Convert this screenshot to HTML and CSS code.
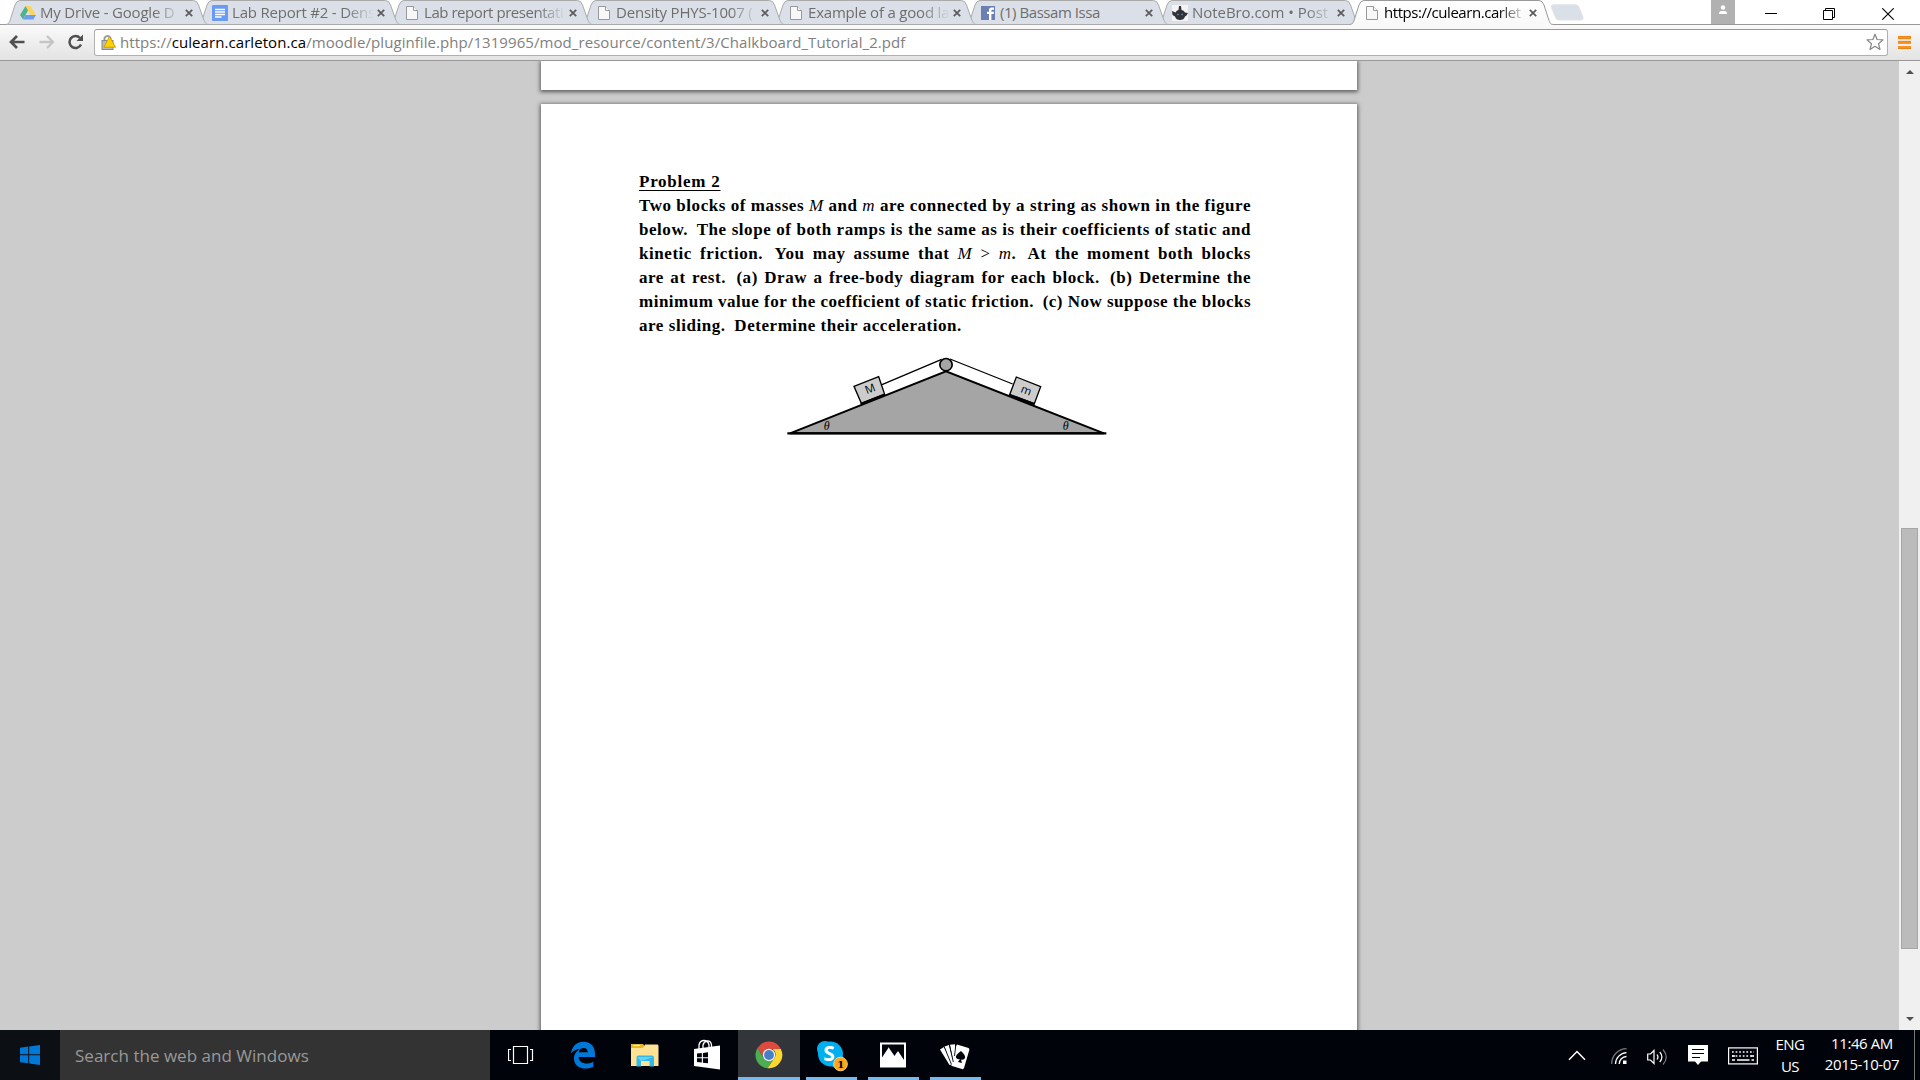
FILE: index.html
```html
<!DOCTYPE html>
<html lang="en">
<head>
<meta charset="utf-8">
<title>Chalkboard_Tutorial_2.pdf</title>
<link rel="stylesheet" href="styles.css">
</head>
<body>
<svg class="defs" width="0" height="0">
  <defs>
    <linearGradient id="activeFill" x1="0" y1="0" x2="0" y2="1"><stop offset="0" stop-color="#fff"/><stop offset="1" stop-color="#f8f8f8"/></linearGradient>
    <symbol id="tab" viewBox="0 0 204 25"><path d="M0 24.5C3 24 3.500 22 4.500 19L9 5Q10.500.5 14 .5H187.500Q191 .5 192.500 5L197.500 19C199 23 200 24.500 203 24.500Z" fill="#dbe0e8" stroke="#aaa"/></symbol>
    <symbol id="close" viewBox="0 0 8 8"><path d="M.8.8 7.200 7.200M7.200.8.8 7.200" stroke="#5d5d5d" stroke-width="1.800"/></symbol>
    <symbol id="doc" viewBox="0 0 12 14"><path d="M.5.5H7.500L11.500 4.500V13.500H.5Z" fill="#f8f8f8" stroke="#999"/><path d="M7.500.5V4.500H11.500" fill="#fff" stroke="#999"/></symbol>
  </defs>
</svg>

<header class="browser">
  <div class="strip">
    <div class="tabs">
      <div class="tab"><svg class="shape"><use href="#tab"/></svg>
        <svg class="icon" viewBox="0 0 16 16"><path d="M5.500 1H10.500L16 10H10.700Z" fill="#fbd55b"/><path d="M5.500 1 8 5.600 3 14.500 0 10Z" fill="#51b38b"/><path d="M5.500 10H16L13.300 14.500H3Z" fill="#6c9df0"/></svg>
        <span class="title faded">My Drive - Google D</span><svg class="close"><use href="#close"/></svg></div>
      <div class="tab"><svg class="shape"><use href="#tab"/></svg>
        <svg class="icon" viewBox="0 0 16 16"><rect width="16" height="16" rx="1" fill="#689bf3"/><path d="M3 4.500H13M3 7H13M3 9.500H13M3 12H9.500" stroke="#fff" stroke-width="1.300"/></svg>
        <span class="title faded">Lab Report #2 - Dens</span><svg class="close"><use href="#close"/></svg></div>
      <div class="tab"><svg class="shape"><use href="#tab"/></svg><svg class="icon paper"><use href="#doc"/></svg>
        <span class="title faded tight">Lab report presentati</span><svg class="close"><use href="#close"/></svg></div>
      <div class="tab"><svg class="shape"><use href="#tab"/></svg><svg class="icon paper"><use href="#doc"/></svg>
        <span class="title faded">Density PHYS-1007 (</span><svg class="close"><use href="#close"/></svg></div>
      <div class="tab"><svg class="shape"><use href="#tab"/></svg><svg class="icon paper"><use href="#doc"/></svg>
        <span class="title faded">Example of a good la</span><svg class="close"><use href="#close"/></svg></div>
      <div class="tab"><svg class="shape"><use href="#tab"/></svg>
        <svg class="icon" viewBox="0 0 16 16"><rect x="1" y="1" width="14" height="14" fill="#6b7fb5"/><path d="M9 15V9H7V6.800H9V5Q9 2.500 11.500 2.500H14V4.800H12.200Q11.400 4.800 11.400 5.700V6.800H14L13.700 9H11.400V15Z" fill="#fff"/></svg>
        <span class="title tight">(1) Bassam Issa</span><svg class="close"><use href="#close"/></svg></div>
      <div class="tab"><svg class="shape"><use href="#tab"/></svg>
        <svg class="icon" viewBox="0 0 16 16"><rect width="16" height="16" fill="#f4f4f4"/><path d="M7 1H9L9.500 5Q12 5 13 7.500L16 8 14.500 10.500 13 11.500Q12 15 8 15T3 11.500L.5 10 0 6 3.500 7.500Q4.500 5 6.500 5Z" fill="#30343a"/><path d="M5 8.500 7.500 9.500 5.500 10.500ZM11 8.500 8.800 9.500 10.500 10.500Z" fill="#718ba0"/></svg>
        <span class="title faded loose">NoteBro.com • Post a</span><svg class="close"><use href="#close"/></svg></div>
      <div class="tab active"><svg class="shape" viewBox="0 0 204 25"><path d="M0 24.500C3 24 3.500 22 4.500 19L9 5Q10.500.5 14 .5H189Q192.500.5 194 5L198.500 19C200 23 200 24.500 204 24.500V25H0Z" fill="url(#activeFill)"/><path d="M0 24.500C3 24 3.500 22 4.500 19L9 5Q10.500.5 14 .5H189Q192.500.5 194 5L198.500 19C200 23 200 24.500 204 24.500" fill="none" stroke="#999"/></svg><svg class="icon paper"><use href="#doc"/></svg>
        <span class="title faded tight">https://culearn.carlet</span><svg class="close"><use href="#close"/></svg></div>
    </div>
    <svg class="newtab" width="34" height="17" viewBox="0 0 34 17"><path d="M3.500.8H25.500Q28 .8 29 3L33 13.500Q33.500 16 31 16H9Q6.500 16 5.500 13.500L1.500 3.500Q.8.8 3.500.8Z" fill="#dae0e8" stroke="#e3e3e3"/></svg>
    <div class="window">
      <div class="user"><svg width="10" height="10" viewBox="0 0 10 10"><circle cx="5" cy="2.500" r="2.200" fill="#fff"/><path d="M1 9Q1 6 3.500 6H6.500Q9 6 9 9Z" fill="#fff"/></svg></div>
      <svg class="wmin" width="12" height="12"><path d="M0 6.500H12" stroke="#000"/></svg>
      <svg class="wmax" width="12" height="12"><path d="M.5 2.500H9.500V11.500H.5ZM2.500 2V.5H11.500V9.500H10" fill="none" stroke="#000"/></svg>
      <svg class="wclose" width="12" height="12"><path d="M.3.3 11.700 11.700M11.700.3.3 11.700" stroke="#000" stroke-width="1.100"/></svg>
    </div>
  </div>
  <div class="toolbar">
    <svg class="back" width="16" height="14" viewBox="0 0 16 14"><path d="M8 1 2 7 8 13M2 7H15.500" fill="none" stroke="#505050" stroke-width="2.700"/></svg>
    <svg class="forward" width="16" height="14" viewBox="0 0 16 14"><path d="M8 1 14 7 8 13M14 7H.5" fill="none" stroke="#c5c5c5" stroke-width="2.300"/></svg>
    <svg class="reload" width="16" height="16" viewBox="0 0 16 16"><path d="M13 10.500A6 6 0 1 1 12 4" fill="none" stroke="#505050" stroke-width="2.500"/><path d="M15 .5V7H8.500Z" fill="#505050"/></svg>
    <div class="omnibox">
      <svg class="lock" width="16" height="16" viewBox="0 0 16 16"><path d="M3.500 7V4A3.200 3.200 0 0 1 9.500 4V7" fill="none" stroke="#999" stroke-width="2"/><rect x="1" y="6.500" width="11" height="9" fill="#bbb" stroke="#888"/><path d="M8.500 2.500 14.500 13.200H2.800Z" fill="#ffd200" stroke="#cfa000" stroke-linejoin="round"/></svg>
      <span class="url">https://<b>culearn.carleton.ca</b>/moodle/pluginfile.php/1319965/mod_resource/content/3/Chalkboard_Tutorial_2.pdf</span>
      <svg class="star" width="18" height="18" viewBox="0 0 18 18"><path d="M9 1.200 11.100 6.500 17 6.900 12.500 10.700 14 16.500 9 13.300 4 16.500 5.500 10.700 1 6.900 6.900 6.500Z" fill="#fff" stroke="#858585" stroke-width="1.200" stroke-linejoin="round"/></svg>
    </div>
    <svg class="menu" width="13" height="13" viewBox="0 0 13 13"><path d="M0 1.500H13M0 6.500H13M0 11.500H13" stroke="#f7931e" stroke-width="3"/><path d="M0 2.800H13M0 5.300H13M0 12.700H13M0 .3H13" stroke="#dc7610" stroke-width=".6"/></svg>
  </div>
</header>

<main class="viewer">
  <div class="pages">
    <section class="page previous"></section>
    <section class="page current">
      <div class="problem">
        <p class="heading"><u>Problem 2</u></p>
        <p>Two blocks of masses <i>M</i> and <i>m</i> are connected by a string as shown in the figure</p>
        <p>below.&thinsp; The slope of both ramps is the same as is their coefficients of static and</p>
        <p>kinetic friction.&thinsp; You may assume that <i>M</i> <span class="rel">&gt;</span> <i>m</i>.&thinsp; At the moment both blocks</p>
        <p>are at rest.&thinsp; (a) Draw a free-body diagram for each block.&thinsp; (b) Determine the</p>
        <p class="dense">minimum value for the coefficient of static friction.&thinsp; (c) Now suppose the blocks</p>
        <p class="last">are sliding.&thinsp; Determine their acceleration.</p>
      </div>
      <svg class="figure" width="350" height="100" viewBox="0 0 1050 300">
        <path d="M60 265 528 79 1002 265Z" fill="#a5a5a5" stroke="#000" stroke-width="6"/>
        <path d="M52 265H1009" stroke="#000" stroke-width="7"/>
        <path d="M336 119 515 43M540 42 728 117" stroke="#000" stroke-width="4"/>
        <path d="M252 124 326 95 344 148 274 175Z" fill="#ccc" stroke="#000" stroke-width="4"/>
        <path d="M739 96 812 125 793 176 719 149Z" fill="#ccc" stroke="#000" stroke-width="4"/>
        <path d="M272 177 344 149M719 150 794 178" stroke="#000" stroke-width="7"/>
        <circle cx="528" cy="59" r="18.500" fill="#a5a5a5" stroke="#000" stroke-width="5"/>
        <text class="mass" transform="translate(290 148) rotate(-21)">M</text>
        <text class="mass" transform="translate(750 141) rotate(21)">m</text>
        <text class="theta" x="161" y="256">θ</text>
        <text class="theta" x="878" y="256">θ</text>
      </svg>
    </section>
  </div>
  <div class="scrollbar">
    <svg width="8" height="4"><path d="M0 4 4 0 8 4Z" fill="#505050"/></svg>
    <div class="thumb"></div>
    <svg class="down" width="8" height="4"><path d="M0 0 4 4 8 0Z" fill="#505050"/></svg>
  </div>
</main>

<footer class="taskbar">
  <div class="start"><svg width="20" height="20" viewBox="0 0 20 20"><path d="M0 2.800 8.200 1.600V9.300H0ZM9.200 1.400 20 0V9.300H9.200ZM0 10.300H8.200V18.300L0 17.200ZM9.200 10.300H20V20L9.200 18.500Z" fill="#0078d7"/></svg></div>
  <div class="search">Search the web and Windows</div>
  <div class="apps">
    <div class="app"><svg width="26" height="20" viewBox="0 0 26 20"><path d="M5.500 1.500H19.500V18.500H5.500ZM3 4.500H.5V15.500H3M22 4.500H24.500V15.500H22" fill="none" stroke="#fff" stroke-width="1.200"/></svg></div>
    <div class="app"><svg width="26" height="28" viewBox="0 0 26 28"><path d="M1 12.500C2 5 7 .8 13.500.8 21 .8 25 6 25 13V16H8.500C9 20.500 12.500 22.500 16.500 22.500 19.500 22.500 21.500 21.700 23.300 20.700V25.800C21 27 18.500 27.600 15.500 27.600 8.500 27.600 4 23.500 4 17.500 4 13 6.500 9.500 10.500 7.700 6.500 8 3 9.500 1 12.500ZM8.700 11.300H17.700C17.700 8.500 16.300 7 13.500 7 11 7 9.300 8.500 8.700 11.300Z" fill="#0078d7"/></svg></div>
    <div class="app"><svg width="28" height="24" viewBox="0 0 28 24"><path d="M0 1H12L14 4V7H0Z" fill="#e8b730"/><path d="M0 5H12L14 1.500H26.500Q27.500 1.500 27.500 3V23H0Z" fill="#ffe293"/><path d="M2.500 2.500H9" stroke="#fff"/><path d="M5.500 23.500V14.500Q5.500 12.500 7.500 12.500H21Q23 12.500 23 14.500V23.500H18.500V18H10V23.500Z" fill="#31b9ec"/><path d="M6 14H22.500L10 18Z" fill="#69d1f5"/></svg></div>
    <div class="app"><svg class="store" width="26" height="31" viewBox="0 0 26 31"><path d="M5 10V6Q6 1.500 10 1.500T15 6V8M9 9V6Q10 2.500 13 2 17 1.500 17.500 6V8" fill="none" stroke="#fff" stroke-width="1.300"/><path d="M0 10 26 6.500V30.500L0 27Z" fill="#fff"/><path d="M3 14.500 7.800 14V18.300H3ZM8.900 13.900 14 13.300V18.300H8.900ZM3 19.300H7.800V23.500L3 23ZM8.900 19.300H14V24.300L8.900 23.700Z" fill="#00040a"/></svg></div>
    <div class="app open focused"><svg width="28" height="28" viewBox="0 0 28 28"><path d="M2.500 7A13.200 13.200 0 0 1 25.800 8H14A6.200 6.200 0 0 0 8.200 16Z" fill="#dd4b3e"/><path d="M2.500 7A13.200 13.200 0 0 0 12.500 27.200L18.800 17.800A6.200 6.200 0 0 1 8.600 17.100Z" fill="#4cae50"/><path d="M25.800 8A13.200 13.200 0 0 1 12.500 27.200L19.400 17A6.200 6.200 0 0 0 17.500 8Z" fill="#fdd62e"/><circle cx="14" cy="14" r="6.200" fill="#f3f3f3"/><circle cx="14" cy="14" r="4.900" fill="#467fc5"/></svg></div>
    <div class="app open"><svg class="skype" width="32" height="32" viewBox="0 0 32 32"><circle cx="9" cy="9" r="8" fill="#00aff0"/><circle cx="20" cy="20" r="7.500" fill="#00aff0"/><circle cx="14.500" cy="14" r="12.500" fill="#00aff0"/><text class="skype-s" x="7.300" y="21">S</text><circle cx="24.500" cy="24" r="6.800" fill="#f9a61a" stroke="#ffd37a"/><text class="badge" x="21.300" y="27.800">1</text></svg></div>
    <div class="app open"><svg width="28" height="26" viewBox="0 0 28 26"><path d="M1 .5H27V25.500H1Z" fill="#fff"/><path d="M3 2.500H25V19L18.500 9.500 15.500 14 10 6 3 16.500Z" fill="#00040a"/><path d="M10 5 3 15.500V18L8 13 10 14ZM19 9 25 18V21L18 14Z" fill="#fff"/></svg></div>
    <div class="app open"><svg class="cards" width="30" height="26" viewBox="0 0 30 26"><path d="M0 5.500 4 3 12 20 9.500 21Z" fill="#fff"/><path d="M4.500 2.500 9 1 14 20 11 21.500Z" fill="#fff"/><path d="M10 .8 15 .3 15.500 16 14 21Z" fill="#fff"/><path d="M17 .5 28.500 4Q29.500 4.500 29.300 6L24 24Q23.500 25.500 22 25L12 22Q11 21.500 11.500 20L16 2Z" fill="#fff"/><path d="M4.300 3 11.500 20.500M9.500 1.500 13.300 18M15.800 1 14.500 12" stroke="#00040a" stroke-width=".9"/><path d="M21 7Q26 11.500 25 14T21 15.500L22 19 18 18 20 15Q17 16 16 13.500T21 7Z" fill="#00040a"/></svg></div>
  </div>
  <div class="tray">
    <svg width="18" height="11" viewBox="0 0 18 11"><path d="M1 9.800 9 1.500 17 9.800" fill="none" stroke="#fff" stroke-width="1.500"/></svg>
    <svg class="wifi" width="16" height="16" viewBox="0 0 16 16"><g fill="none" stroke="#fff" stroke-width="1.300"><path d="M.7 16A15 15 0 0 1 15.500.7" stroke="#777"/><path d="M4.500 16A11.500 11.500 0 0 1 15.500 4.700"/><path d="M8.200 16A7.500 7.500 0 0 1 15.500 8.500"/></g><rect x="12" y="12.500" width="3.500" height="3.500" fill="#fff"/></svg>
    <svg class="volume" width="21" height="18" viewBox="0 0 21 18"><g fill="none" stroke="#fff" stroke-width="1.200"><path d="M.7 6H3.500L7 2.500V15.500L3.500 12H.7Z"/><path d="M10 6.500Q12 9 10 11.500M12.800 4Q17 9 12.800 14"/><path d="M16 1.500Q22.500 9 16 16.500" stroke="#777"/></g></svg>
    <svg class="note" width="20" height="20" viewBox="0 0 20 20"><path d="M0 0H20V16.500H13L10 20 7 16.500H0Z" fill="#fff"/><path d="M4 4.500H16M4 8.500H16M4 12.500H12" stroke="#00040a" stroke-width="1.200"/></svg>
    <svg class="keyboard" width="30" height="18" viewBox="0 0 30 18"><rect x=".6" y=".9" width="28.800" height="16" fill="none" stroke="#fff" stroke-width="1.200"/><path d="M4 5H26M4 9H26" stroke="#fff" stroke-width="1.500" stroke-dasharray="1.700 1.900"/><path d="M4 13H7M9 13H21.500M23.500 13H26M4 9H7M23 9H26" stroke="#fff" stroke-width="1.300"/></svg>
    <div class="stack lang"><span>ENG</span><span>US</span></div>
    <div class="stack clock"><span>11:46 AM</span><span>2015-10-07</span></div>
    <div class="desktop"></div>
  </div>
</footer>
</body>
</html>
```
FILE: styles.css
```css
* { box-sizing: border-box; }
body { margin: 0; width: 1920px; height: 1080px; overflow: hidden; display: flex; flex-direction: column; font-family: "Open Sans", "Noto Sans", sans-serif; background: #ccc; }
svg { flex: none; display: block; }
.defs { position: absolute; }

.browser { height: 61px; flex: none; background: #fff; }
.strip { height: 25px; display: flex; padding-left: 6px; background: linear-gradient(#fff 24px, #999 24px); }
.tabs { display: flex; }
.tab { position: relative; width: 192px; height: 25px; display: flex; align-items: center; padding: 0 0 1px 14px; }
.tab:nth-child(1) { z-index: 8; }
.tab:nth-child(2) { z-index: 7; }
.tab:nth-child(3) { z-index: 6; }
.tab:nth-child(4) { z-index: 5; }
.tab:nth-child(5) { z-index: 4; }
.tab:nth-child(6) { z-index: 3; }
.tab:nth-child(7) { z-index: 2; }
.tab.active { z-index: 9; }
.shape { position: absolute; left: 0; top: 0; width: 204px; height: 25px; }
.icon { position: relative; width: 16px; height: 16px; margin: 1px 4px 0 0; }
.icon.paper { width: 12px; height: 14px; margin: 1px 6px 0 2px; }
.title { position: relative; flex: none; width: 144px; height: 24px; white-space: nowrap; font-size: 15px; line-height: 25px; letter-spacing: -.2px; color: #6e6e6e; }
.title.tight { letter-spacing: -.45px; }
.title.loose { letter-spacing: -.05px; }
.title.faded { -webkit-mask-image: linear-gradient(90deg, #000 114px, transparent 142px); }
.active .title { color: #000; }
.close { position: relative; width: 8px; height: 8px; margin: 2px 0 0 1px; }
.newtab { margin: 4px 0 0 8px; }
.window { margin-left: auto; height: 24px; display: flex; align-items: center; padding-right: 26px; }
.user { width: 24px; height: 24px; background: #b1b1b1; display: flex; justify-content: center; padding-top: 5px; }
.wmin { margin: 2px 0 0 30px; }
.wmax { margin: 4px 0 0 46px; }
.wclose { margin: 4px 0 0 47px; }

.toolbar { height: 36px; display: flex; align-items: center; padding: 0 9px 1px; background: linear-gradient(#fafafa, #e3e3e3); border-bottom: 1px solid #999; }
.forward { margin-left: 14px; }
.reload { margin-left: 13px; }
.omnibox { flex: 1; height: 27px; margin: 0 10px 0 10px; border: 1px solid #b0b0b0; border-top-color: #999; border-radius: 3px; background: #fff; display: flex; align-items: center; padding: 0 3px 0 6px; }
.url { margin: 0 0 1px 3px; font-size: 15px; letter-spacing: .07px; line-height: 24px; color: #808080; white-space: nowrap; }
.url b { font-weight: 400; color: #000; }
.star { margin-left: auto; }

.viewer { flex: 1; min-height: 0; display: flex; }
.pages { flex: 1; display: flex; flex-direction: column; align-items: center; gap: 14px; padding-right: 1px; overflow: hidden; }
.page { width: 816px; flex: none; background: #fff; box-shadow: 0 1px 4px 1px rgba(0, 0, 0, .55); }
.previous { height: 29px; }
.current { height: 1056px; padding: 66px 97px 0 98px; }
.problem { width: 612px; font: 700 17px/24px "Liberation Serif", serif; letter-spacing: .55px; color: #000; }
.problem p { margin: 0; height: 24px; white-space: nowrap; text-align-last: justify; }
.problem p.heading, .problem p.last { text-align-last: left; }
.problem p.dense { word-spacing: -1px; letter-spacing: .5px; }
.problem i, .problem .rel { font-weight: 400; }
.problem u { text-decoration-thickness: 1px; text-underline-offset: 3px; letter-spacing: .75px; }
.figure { margin: 7px 0 0 131px; }
.mass { font: 34px "Open Sans", sans-serif; }
.theta { font: italic 36px "Liberation Serif", serif; }

.scrollbar { width: 21px; background: #f0f0f0; display: flex; flex-direction: column; align-items: center; padding: 9px 0; }
.thumb { width: 17px; height: 421px; margin-top: 454px; background: #bbb; border: 1px solid #a6a6a6; }
.down { margin-top: auto; }

.taskbar { height: 50px; flex: none; background: #00040a; display: flex; }
.start { width: 60px; background: #0c1015; display: flex; align-items: center; justify-content: center; }
.search { width: 430px; background: #333; color: #999; font-size: 17px; line-height: 51px; padding-left: 15px; letter-spacing: .02px; }
.apps { display: flex; }
.app { width: 62px; height: 50px; display: flex; align-items: center; justify-content: center; position: relative; }
.app.open::after { content: ""; position: absolute; left: 6px; right: 5px; bottom: 0; height: 3px; background: #76b9ed; }
.app.focused { background: #32363b; }
.app.focused::after { left: 0; right: 0; }
.store { margin-bottom: 1px; }
.skype { margin: 2px 0 0 2px; }
.cards { margin-top: 3px; }
.skype-s { font: 700 21px "Open Sans", sans-serif; fill: #fff; }
.badge { font: 700 10px "DejaVu Serif", serif; fill: #000; }
.tray { margin-left: auto; display: flex; align-items: center; color: #fff; }
.wifi { margin: 2px 0 0 25px; }
.volume { margin: 3px 0 0 20px; }
.note { margin-left: 20px; }
.keyboard { margin: 2px 0 0 20px; }
.stack { display: flex; flex-direction: column; align-items: center; font-size: 15px; line-height: 21px; white-space: nowrap; }
.lang { width: 30px; margin-left: 17px; line-height: 22px; letter-spacing: -.5px; }
.clock { width: 78px; margin: 0 13px 2px 18px; letter-spacing: -.4px; }
.desktop { width: 6px; height: 50px; border-left: 1px solid #777; }
```
